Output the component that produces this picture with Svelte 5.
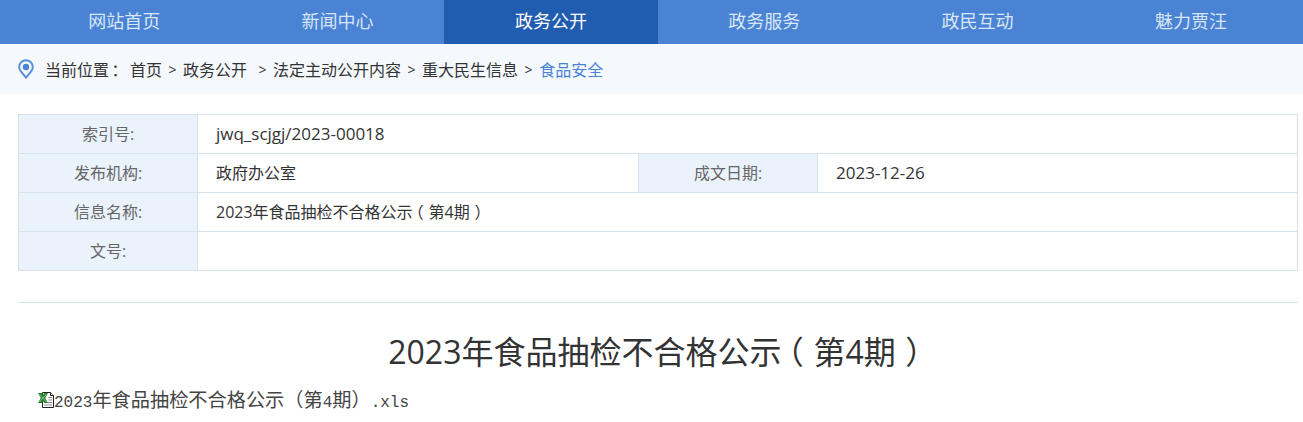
<script>
	const nav = ['网站首页', '新闻中心', '政务公开', '政务服务', '政民互动', '魅力贾汪'];
	const crumbs = ['首页', '政务公开', '法定主动公开内容', '重大民生信息'];
</script>

{#snippet title()}
	2023年食品抽检不合格公示<span class="lp">（</span>第4期<span class="rp">）</span>
{/snippet}

<main>
	<nav>
		<ul>
			{#each nav as item, i}
				<li class:active={i === 2}>{item}</li>
			{/each}
		</ul>
	</nav>

	<div class="crumbs">
		<svg width="16" height="20" viewBox="0 0 16 20" class="pin">
			<path d="M8 1.2C4.2 1.2 1.2 4.2 1.2 8c0 1.6.6 3 1.5 4.2L8 18.6l5.3-6.4c.9-1.2 1.5-2.6 1.5-4.2C14.8 4.2 11.8 1.2 8 1.2z" fill="none" stroke="#5a8fd9" stroke-width="2" />
			<circle cx="8" cy="8" r="3.2" fill="#4a83d4" />
		</svg>
		<span class="here">当前位置<span class="colon">：</span></span>
		{#each crumbs as c, i}
			<span class:wide={i === 1}>{c}</span>
			<span class="sep">&gt;</span>
		{/each}
		<span class="current">食品安全</span>
	</div>

	<div class="content">
		<div class="meta">
			<div class="row">
				<div class="label">索引号:</div>
				<div class="value id">jwq_scjgj/2023-00018</div>
			</div>
			<div class="row">
				<div class="label">发布机构:</div>
				<div class="value half">政府办公室</div>
				<div class="label">成文日期:</div>
				<div class="value id">2023-12-26</div>
			</div>
			<div class="row">
				<div class="label">信息名称:</div>
				<div class="value">{@render title()}</div>
			</div>
			<div class="row">
				<div class="label">文号:</div>
				<div class="value"></div>
			</div>
		</div>

		<h1>{@render title()}</h1>

		<p class="attach">
			<svg width="16" height="16" viewBox="0 0 16 16" class="xls">
				<path d="M4.5.5h8l3 3v12h-11z" fill="#fff" stroke="#222" />
				<path d="M12.5.5v3h3" fill="#ddd" stroke="#222" />
				<path d="M10.5 5.5h3.5M10.5 8h3.5M8 10.5h6M6 13h8" stroke="#888" />
				<path d="M0 1h3.8L5 3l1.2-2H10L7.2 6 10 11H6.2L5 9l-1.2 2H0l2.8-5z" fill="#27802f" />
				<path d="M1.5 2l7 8M8.5 2l-7 8" stroke="#a5d8a8" stroke-width=".7" />
			</svg><span><span class="ascii">2023</span>年食品抽检不合格公示（第<span class="ascii">4</span>期）<span class="ascii">.xls</span></span>
		</p>
	</div>
</main>

<style>
	:global(body) {
		font-family: 'Open Sans', 'Noto Sans CJK SC', sans-serif;
		background: #fff;
		color: #333;
	}
	main {
		height: 422px;
		overflow: hidden;
	}
	nav {
		background: #4a83d4;
		height: 44px;
	}
	ul {
		display: grid;
		grid-template-columns: repeat(6, 1fr);
		width: 1280px;
		margin: 0 0 0 17.6px;
		padding: 0;
		list-style: none;
	}
	li {
		height: 44px;
		line-height: 42px;
		text-align: center;
		font-size: 18px;
		color: #d9e6f7;
	}
	li.active {
		background: #205cb0;
		color: #fff;
	}
	.crumbs {
		display: flex;
		align-items: center;
		height: 50px;
		padding-left: 18px;
		background: #f5f9fe;
		font-size: 16px;
		color: #333;
	}
	.pin {
		margin-right: 11px;
	}
	.here {
		width: 85px;
		white-space: nowrap;
	}
	.colon {
		font-feature-settings: 'halt';
		margin-left: 0.15em;
	}
	.sep {
		margin: 0 6.5px;
		font-size: 14px;
	}
	.wide {
		margin-right: 5px;
	}
	.current {
		color: #4a83d4;
	}
	.content {
		width: 1280px;
		margin: 20px 0 0 18px;
	}
	.meta {
		border: 1px solid #d8e2ec;
		border-bottom: 0;
		margin-bottom: 31px;
	}
	.row {
		display: flex;
		height: 39px;
		border-bottom: 1px solid #d8e2ec;
		box-sizing: border-box;
		font-size: 16px;
	}
	.label {
		flex: 0 0 179px;
		box-sizing: border-box;
		line-height: 38px;
		text-align: center;
		background: #eaf2fc;
		border-right: 1px solid #d8e2ec;
		color: #666;
	}
	.value {
		flex: 1;
		line-height: 38px;
		padding-left: 18px;
		color: #333;
	}
	.half {
		flex: 0 0 441px;
		box-sizing: border-box;
		border-right: 1px solid #d8e2ec;
	}
	.id {
		font-size: 17px;
	}
	.lp,
	.rp {
		font-feature-settings: 'halt';
	}
	.lp {
		margin: 0 0.3em 0 0.2em;
	}
	.rp {
		margin: 0 0.2em 0 0.3em;
	}
	h1 {
		margin: 0;
		padding-top: 26px;
		border-top: 1px solid #d8e2ec;
		font-size: 32px;
		font-weight: 400;
		line-height: 46px;
		text-align: center;
		color: #333;
	}
	.attach {
		display: flex;
		align-items: center;
		margin: 10px 0 0 20px;
		font-family: 'Noto Sans CJK SC', sans-serif;
		font-size: 19.2px;
		line-height: 28px;
		color: #444;
	}
	.xls {
		margin-bottom: 2px;
	}
	.ascii {
		font-family: 'Liberation Mono', monospace;
		font-size: 16px;
	}
</style>
